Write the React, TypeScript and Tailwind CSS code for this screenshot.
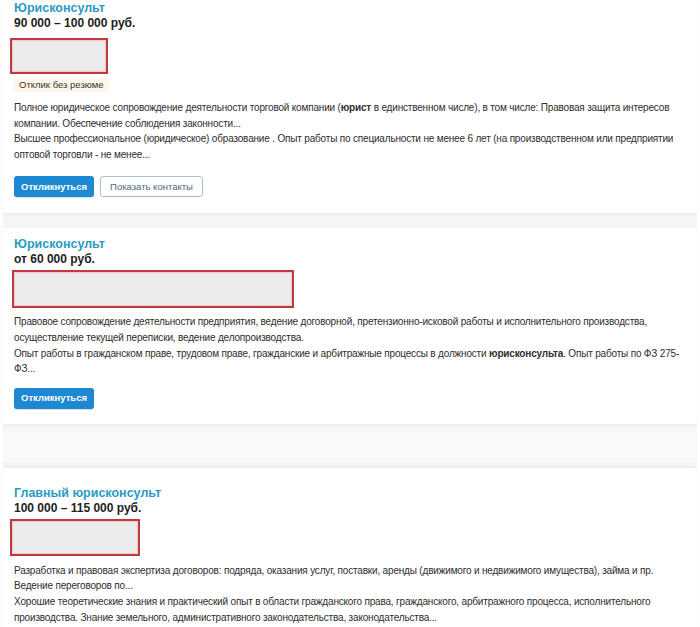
import React from "react";

const font = { fontFamily: '"Liberation Sans", Arial, sans-serif' };

function RedBox({ w, h }: { w: number; h: number }) {
  return (
    <div
      className="-ml-[4px] border-2 border-[#bf3a40] bg-[#ebebeb] shadow-[inset_0_0_0_1px_#f3c9c9]"
      style={{ width: w, height: h }}
    />
  );
}

function Title({ children }: { children: React.ReactNode }) {
  return <div className="text-[12.5px] leading-[16px] font-bold text-[#2b9bc3]">{children}</div>;
}

function Salary({ children }: { children: React.ReactNode }) {
  return <div className="text-[12px] leading-[14px] font-bold text-[#1e1e1e]">{children}</div>;
}

function Desc({ children }: { children: React.ReactNode }) {
  return (
    <div className="whitespace-nowrap text-[10px] leading-[15.6px] tracking-[-0.18px] text-[#2e2e2e]">{children}</div>
  );
}

function ApplyBtn() {
  return (
    <button className="h-[21px] w-[80px] rounded-[3px] bg-[#1c89d2] text-[9.5px] font-semibold text-white shadow-[0_1px_1px_rgba(0,0,0,0.15)]">
      Откликнуться
    </button>
  );
}

export default function App() {
  return (
    <div style={font} className="h-[627px] w-[700px] overflow-hidden bg-white">
      <div className="mx-[3px] bg-[#f5f5f5]">
        {/* Card 1 */}
        <div className="bg-white px-[11px] pt-0 pb-[16px] shadow-[0_1px_3px_rgba(0,0,0,0.06)]">
          <Title>Юрисконсульт</Title>
          <Salary>90 000 – 100 000 руб.</Salary>
          <div className="mt-[8px]">
            <RedBox w={98} h={36} />
          </div>
          <div className="mt-[4px] h-[14px] w-fit bg-[#fdf6e9] px-[5px] text-[9.5px] leading-[14px] text-[#333]">
            Отклик без резюме
          </div>
          <div className="mt-[8px]">
            <Desc>
              Полное юридическое сопровождение деятельности торговой компании (<b>юрист</b> в единственном числе), в том числе: Правовая защита интересов
              <br />
              компании. Обеспечение соблюдения законности...
              <br />
              Высшее профессиональное (юридическое) образование . Опыт работы по специальности не менее 6 лет (на производственном или предприятии
              <br />
              оптовой торговли - не менее...
            </Desc>
          </div>
          <div className="mt-[14px] flex gap-[6px]">
            <ApplyBtn />
            <button className="h-[21px] w-[103px] rounded-[3px] border border-[#a8c3cb] bg-white text-[9.5px] text-[#4d6b7a]">
              Показать контакты
            </button>
          </div>
        </div>

        <div className="h-[15px]" />

        {/* Card 2 */}
        <div className="bg-white px-[11px] pt-[8px] pb-[15px] shadow-[0_1px_3px_rgba(0,0,0,0.06)]">
          <Title>Юрисконсульт</Title>
          <Salary>от 60 000 руб.</Salary>
          <div className="mt-[4px] ml-[2px]">
            <RedBox w={282} h={38} />
          </div>
          <div className="mt-[6px]">
            <Desc>
              Правовое сопровождение деятельности предприятия, ведение договорной, претензионно-исковой работы и исполнительного производства,
              <br />
              осуществление текущей переписки, ведение делопроизводства.
              <br />
              Опыт работы в гражданском праве, трудовом праве, гражданские и арбитражные процессы в должности <b>юрисконсульта</b>. Опыт работы по ФЗ 275-
              <br />
              ФЗ...
            </Desc>
          </div>
          <div className="mt-[11px] flex">
            <ApplyBtn />
          </div>
        </div>

        <div className="py-[6px]">
          <div className="h-[32px] bg-[#f9f9f9]" />
        </div>

        {/* Card 3 */}
        <div className="bg-white px-[11px] pt-[17px] pb-[15px] shadow-[0_-1px_3px_rgba(0,0,0,0.06)]">
          <Title>Главный юрисконсульт</Title>
          <Salary>100 000 – 115 000 руб.</Salary>
          <div className="mt-[4px]">
            <RedBox w={130} h={37} />
          </div>
          <div className="mt-[7px]">
            <Desc>
              Разработка и правовая экспертиза договоров: подряда, оказания услуг, поставки, аренды (движимого и недвижимого имущества), займа и пр.
              <br />
              Ведение переговоров по...
              <br />
              Хорошие теоретические знания и практический опыт в области гражданского права, гражданского, арбитражного процесса, исполнительного
              <br />
              производства. Знание земельного, административного законодательства, законодательства...
            </Desc>
          </div>
        </div>
      </div>
    </div>
  );
}
